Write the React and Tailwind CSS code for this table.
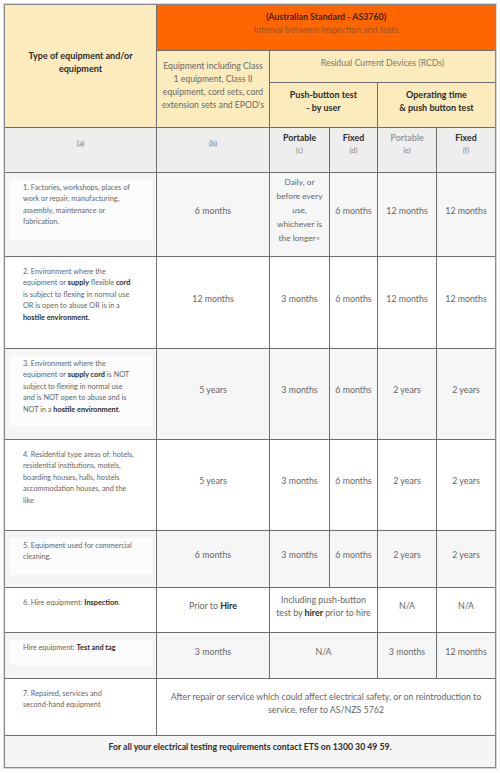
import React from 'react';

const B = ({ children }) => <strong className="font-bold text-[#2a2a2a]">{children}</strong>;

// left column description cell
const Desc = ({ gray, children }) => (
    <div className={`pt-[7px] pl-[5px] pr-[4px] ${gray ? 'bg-[#f5f5f5]' : 'bg-white'}`}>
        <div className={`pt-[2px] pb-[12px] pl-[13px] pr-1 text-[7.3px] leading-[11.4px] whitespace-nowrap text-[#666] ${gray ? 'bg-[#fcfcfc]' : 'bg-white'}`}>
            {children}
        </div>
    </div>
);

const Cell = ({ gray, className = '', children }) => (
    <div
        className={`flex items-center justify-center text-center pb-[9px] px-1 text-[8.8px] leading-[13px] text-[#666] ${gray ? 'bg-[#f6f6f6]' : 'bg-white'} ${className}`}
    >
        <div>{children}</div>
    </div>
);

const rows = [
    {
        gray: true,
        a: <>1. Factories, workshops, places of<br />work or repair, manufacturing,<br />assembly, maintenance or<br />fabrication.</>,
        cells: [
            { v: '6 months' },
            { v: <span className="text-[8.3px]">Daily, or<br />before every<br />use,<br />whichever is<br />the longer&lt;</span> },
            { v: '6 months' },
            { v: '12 months' },
            { v: '12 months' },
        ],
    },
    {
        a: <>2. Environment where the<br />equipment or <B>supply</B> flexible <B>cord</B><br />is subject to flexing in normal use<br />OR is open to abuse OR is in a<br /><B>hostile environment.</B></>,
        cells: [
            { v: '12 months' },
            { v: '3 months' },
            { v: '6 months' },
            { v: '12 months' },
            { v: '12 months' },
        ],
    },
    {
        gray: true,
        a: <>3. Environment where the<br />equipment or <B>supply cord</B> is NOT<br />subject to flexing in normal use<br />and is NOT open to abuse and is<br />NOT in a <B>hostile environment</B>.</>,
        cells: [
            { v: '5 years' },
            { v: '3 months' },
            { v: '6 months' },
            { v: '2 years' },
            { v: '2 years' },
        ],
    },
    {
        a: <>4. Residential type areas of: hotels,<br />residential institutions, motels,<br />boarding houses, halls, hostels<br />accommodation houses, and the<br />like</>,
        cells: [
            { v: '5 years' },
            { v: '3 months' },
            { v: '6 months' },
            { v: '2 years' },
            { v: '2 years' },
        ],
    },
    {
        gray: true,
        a: <>5. Equipment used for commercial<br />cleaning.</>,
        cells: [
            { v: '6 months' },
            { v: '3 months' },
            { v: '6 months' },
            { v: '2 years' },
            { v: '2 years' },
        ],
    },
    {
        a: <>6. Hire equipment: <B>Inspection</B>.</>,
        cells: [
            { v: <>Prior to <B>Hire</B></> },
            { v: <>Including push-button<br />test by <B>hirer</B> prior to hire</>, span: 'col-span-2' },
            { v: 'N/A' },
            { v: 'N/A' },
        ],
    },
    {
        gray: true,
        a: <>Hire equipment: <B>Test and tag</B></>,
        cells: [
            { v: '3 months' },
            { v: 'N/A', span: 'col-span-2' },
            { v: '3 months' },
            { v: '12 months' },
        ],
    },
    {
        a: <>7. Repaired, services and<br />second-hand equipment</>,
        cells: [
            {
                v: <>After repair or service which could affect electrical safety, or on reintroduction to<br />service, refer to AS/NZS 5762</>,
                span: 'col-span-5',
            },
        ],
    },
];

export default function App() {
    return (
        <div className="bg-white p-[4px] w-[500px] font-['Lato',sans-serif]">
            <div className="border border-[#888] shadow-[0_0_0_1px_#d8d8d8] bg-[#6e6e6e]">
                <div className="grid gap-px grid-cols-[151px_112px_59px_47px_58px_58px] grid-rows-[45px_31px_44px_44px_83px_91px_90px_90px_56px_44px_45px_56px_31px]">
                    {/* header */}
                    <div className="row-span-3 bg-[#fcebbd] flex items-center justify-center text-center pb-[9px] text-[9px] leading-[13px] font-bold text-[#2a2a2a]">
                        <div>Type of equipment and/or<br />equipment</div>
                    </div>
                    <div className="col-span-5 bg-[#ff6600] flex items-center justify-center text-center pb-[9px] text-[8.8px] leading-[13px]">
                        <div>
                            <div className="font-bold text-[#3a2410]">(Australian Standard - AS3760)</div>
                            <div className="text-[#9a5226]">Interval between inspection and tests</div>
                        </div>
                    </div>
                    <div className="row-span-2 bg-[#fcebbd] flex items-center justify-center text-center pb-[9px] text-[8.7px] leading-[13px] text-[#6a6a6a]">
                        <div>Equipment including Class<br />1 equipment, Class II<br />equipment, cord sets, cord<br />extension sets and EPOD's</div>
                    </div>
                    <div className="col-span-4 bg-[#fcebbd] flex items-center justify-center text-center pb-[9px] text-[8.7px] leading-[13px] text-[#7a7a7a]">
                        Residual Current Devices (RCDs)
                    </div>
                    <div className="col-span-2 bg-[#fcebbd] flex items-center justify-center text-center pb-[9px] text-[9px] leading-[13px] font-bold text-[#2a2a2a]">
                        <div>Push-button test<br />- by user</div>
                    </div>
                    <div className="col-span-2 bg-[#fcebbd] flex items-center justify-center text-center pb-[9px] text-[9px] leading-[13px] font-bold text-[#2a2a2a]">
                        <div>Operating time<br />&amp; push button test</div>
                    </div>

                    {/* letters row */}
                    <div className="bg-[#eeeeee] flex items-center justify-center pb-3 text-[7.5px] text-[#777]">(a)</div>
                    <div className="bg-[#eeeeee] flex items-center justify-center pb-3 text-[7.5px] text-[#777]">(b)</div>
                    {[
                        ['Portable', '(c)', 'text-[#2a2a2a]'],
                        ['Fixed', '(d)', 'text-[#2a2a2a]'],
                        ['Portable', '(e)', 'text-[#9a9a9a]'],
                        ['Fixed', '(f)', 'text-[#2a2a2a]'],
                    ].map(([label, letter, color], i) => (
                        <div key={i} className="bg-[#eeeeee] flex items-center justify-center text-center pb-3 leading-[13px]">
                            <div>
                                <div className={`text-[8.8px] font-bold ${color}`}>{label}</div>
                                <div className="text-[7.5px] text-[#888]">{letter}</div>
                            </div>
                        </div>
                    ))}

                    {/* body */}
                    {rows.map((row, r) => (
                        <React.Fragment key={r}>
                            <Desc gray={row.gray}>{row.a}</Desc>
                            {row.cells.map((c, i) => (
                                <Cell key={i} gray={row.gray} className={c.span || ''}>{c.v}</Cell>
                            ))}
                        </React.Fragment>
                    ))}

                    {/* footer */}
                    <div className="col-span-6 bg-[#f5f5f5] flex items-center justify-center pb-[9px] text-[8.7px] font-bold text-[#2a2a2a]">
                        For all your electrical testing requirements contact ETS on 1300 30 49 59.
                    </div>
                </div>
            </div>
        </div>
    );
}
